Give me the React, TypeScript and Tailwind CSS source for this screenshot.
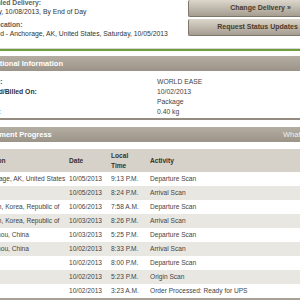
const rows = [
  { loc: "Anchorage, AK, United States", date: "10/05/2013", time: "9:13 P.M.", act: "Departure Scan" },
  { loc: "", date: "10/05/2013", time: "8:24 P.M.", act: "Arrival Scan" },
  { loc: "Incheon, Korea, Republic of", date: "10/06/2013", time: "7:58 A.M.", act: "Departure Scan" },
  { loc: "Incheon, Korea, Republic of", date: "10/03/2013", time: "8:26 P.M.", act: "Arrival Scan" },
  { loc: "Hangzhou, China", date: "10/03/2013", time: "5:25 P.M.", act: "Departure Scan" },
  { loc: "Hangzhou, China", date: "10/02/2013", time: "8:33 P.M.", act: "Arrival Scan" },
  { loc: "", date: "10/02/2013", time: "8:00 P.M.", act: "Departure Scan" },
  { loc: "", date: "10/02/2013", time: "5:23 P.M.", act: "Origin Scan" },
  { loc: "", date: "10/02/2013", time: "3:23 A.M.", act: "Order Processed: Ready for UPS" },
];

const info = [
  ["Service:", "WORLD EASE"],
  ["Shipped/Billed On:", "10/02/2013"],
  ["Type:", "Package"],
  ["Weight:", "0.40 kg"],
];

function SectionHeader({ title, link }: { title: string; link?: string }) {
  return (
    <div className="h-[15px] flex items-center pl-[23px] bg-linear-to-b from-[#b4ada2] to-[#9c9488] text-white text-[7.5px] font-bold">
      <span className="w-[300px] shrink-0 whitespace-nowrap">{title}</span>
      {link && <span className="font-normal text-[#f2efe9] whitespace-nowrap">{link}</span>}
    </div>
  );
}

function App() {
  return (
    <div className="w-[300px] h-[300px] overflow-hidden bg-white text-[#333] font-['Liberation_Sans',Arial,sans-serif]">
      <div className="-ml-[40px] w-[400px]">
        {/* delivery summary + buttons */}
        <div className="h-[48px] flex">
          <div className="w-[228px] shrink-0 pl-[16px] -mt-[2px] text-[6.8px] leading-[9px] whitespace-nowrap">
            <div className="font-bold text-[#5e5e5e]">Scheduled Delivery:</div>
            <div>Tuesday, 10/08/2013, By End of Day</div>
            <div className="font-bold text-[#5e5e5e] mt-[4px]">Last Location:</div>
            <div>Departed - Anchorage, AK, United States, Saturday, 10/05/2013</div>
          </div>
          <div className="w-[144px] flex flex-col gap-[2px]">
            <button className="h-[17px] rounded-[2px] border-l border-b border-[#7f776b] bg-linear-to-b from-[#dcd6cc] to-[#a59d90] text-[#4a3b2c] text-[7px] font-bold">
              Change Delivery »
            </button>
            <button className="h-[17px] rounded-[2px] border-l border-b border-[#7f776b] bg-linear-to-b from-[#dcd6cc] to-[#a59d90] text-[#4a3b2c] text-[7px] font-bold">
              Request Status Updates »
            </button>
          </div>
        </div>
        <div className="h-px bg-[#d6d6d6]" />
        <div className="h-[2px] bg-[#6e9f3c]" />
        <div className="h-[5px]" />

        {/* additional information */}
        <SectionHeader title="Additional Information" />
        <div className="h-[47px] pt-[6px] text-[6.8px] leading-[10px]">
          {info.map(([label, value]) => (
            <div key={label} className="flex whitespace-nowrap">
              <div className="w-[197px] shrink-0 pl-[16px] font-bold text-[#333]">{label}</div>
              <div className="text-[#444]">{value}</div>
            </div>
          ))}
        </div>
        <div className="h-[2px] bg-[#948c80]" />
        <div className="h-[7px]" />

        {/* shipment progress */}
        <SectionHeader title="Shipment Progress" link="What is This?" />
        <div className="h-[7px]" />
        <div className="text-[6.6px] whitespace-nowrap">
          <div className="h-[23px] flex items-center bg-[#d7d2c9] font-bold text-[#333] leading-[10px]">
            <div className="w-[109px] shrink-0 pl-[18px]">Location</div>
            <div className="w-[42px] shrink-0">Date</div>
            <div className="w-[39px] shrink-0">
              Local
              <br />
              Time
            </div>
            <div>Activity</div>
          </div>
          {rows.map((r, i) => (
            <div
              key={i}
              className={`h-[14px] flex items-center text-[#444] ${i % 2 === 1 ? "bg-[#e9e7e2]" : "bg-white"}`}
            >
              <div className="w-[109px] shrink-0 pl-[18px]">{r.loc}</div>
              <div className="w-[42px] shrink-0">{r.date}</div>
              <div className="w-[39px] shrink-0">{r.time}</div>
              <div>{r.act}</div>
            </div>
          ))}
          <div className="h-[2px] bg-[#a8a296]" />
        </div>
      </div>
    </div>
  );
}

export default App;
